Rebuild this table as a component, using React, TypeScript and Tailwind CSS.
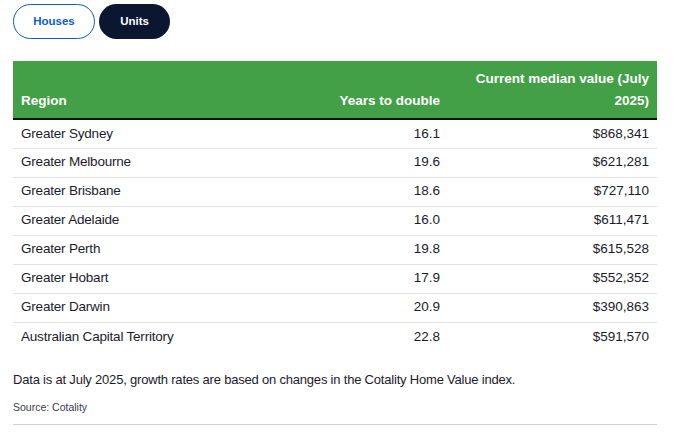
import React from "react";

type Row = { region: string; years: string; value: string };

const ROWS: Row[] = [
  { region: "Greater Sydney", years: "16.1", value: "$868,341" },
  { region: "Greater Melbourne", years: "19.6", value: "$621,281" },
  { region: "Greater Brisbane", years: "18.6", value: "$727,110" },
  { region: "Greater Adelaide", years: "16.0", value: "$611,471" },
  { region: "Greater Perth", years: "19.8", value: "$615,528" },
  { region: "Greater Hobart", years: "17.9", value: "$552,352" },
  { region: "Greater Darwin", years: "20.9", value: "$390,863" },
  { region: "Australian Capital Territory", years: "22.8", value: "$591,570" },
];

export default function App() {
  return (
    <div
      className="min-h-screen bg-white text-[#1b1b2a] px-[13px] pt-[4px]"
      style={{ fontFamily: '"Liberation Sans", Arial, sans-serif' }}
    >
      {/* 탭 버튼 */}
      <div className="flex gap-[4px]">
        <button className="h-[35px] w-[82px] rounded-full border border-[#0b5bd3] bg-white text-[#0b5bd3] text-[11.5px] font-bold">
          Houses
        </button>
        <button className="h-[35px] w-[71px] rounded-full bg-[#0b1631] text-white text-[11.5px] font-bold">
          Units
        </button>
      </div>

      {/* 표 */}
      <table className="mt-[22px] w-[644px] border-collapse text-[13.5px]">
        <thead>
          <tr className="bg-[#43a047] text-white font-bold border-b-2 border-[#111111]">
            <th className="h-[58px] px-[8px] pb-[6px] align-bottom text-left leading-[22px]">Region</th>
            <th className="w-[200px] px-[8px] pb-[6px] align-bottom text-right leading-[22px]">Years to double</th>
            <th className="w-[209px] px-[8px] pb-[6px] align-bottom text-right leading-[22px]">
              Current median value (July
              <br />
              2025)
            </th>
          </tr>
        </thead>
        <tbody>
          {ROWS.map((r, i) => (
            <tr
              key={r.region}
              className={i < ROWS.length - 1 ? "border-b border-[#e2e2e2]" : ""}
            >
              <td className="h-[29px] px-[8px] text-left tracking-[-0.2px]">{r.region}</td>
              <td className="px-[8px] text-right">{r.years}</td>
              <td className="px-[8px] text-right">{r.value}</td>
            </tr>
          ))}
        </tbody>
      </table>

      {/* 하단 설명 */}
      <p className="mt-[19px] text-[13px] leading-[20px] tracking-[-0.2px]">
        Data is at July 2025, growth rates are based on changes in the Cotality Home Value index.
      </p>
      <p className="mt-[9px] text-[10.5px] leading-[16px] text-[#3a3a4a]">Source: Cotality</p>
      <div className="mt-[9px] w-[644px] border-t border-[#cfcfd6]" />
    </div>
  );
}
